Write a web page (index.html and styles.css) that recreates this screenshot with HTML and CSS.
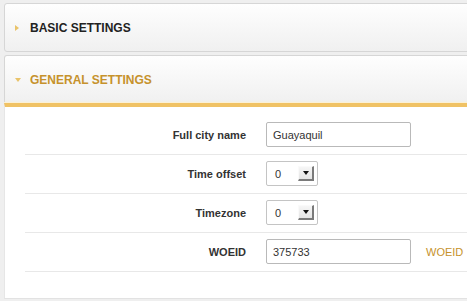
FILE: index.html
```html
<!DOCTYPE html>
<html>
<head>
<meta charset="utf-8">
<link rel="stylesheet" href="styles.css">
</head>
<body>
<div class="viewport">
<div class="page">
  <div class="panel-head">
    <span class="arrow-right"></span>
    <span class="head-title">BASIC SETTINGS</span>
  </div>
  <div class="panel-head open">
    <span class="arrow-down"></span>
    <span class="head-title">GENERAL SETTINGS</span>
  </div>
  <div class="panel-body">
    <div class="row">
      <label class="label">Full city name</label>
      <div class="field"><span class="input wide">Guayaquil</span></div>
    </div>
    <div class="row">
      <label class="label">Time offset</label>
      <div class="field"><span class="select"><span class="sel-val">0</span><span class="sel-btn"><span class="sel-tri"></span></span></span></div>
    </div>
    <div class="row">
      <label class="label">Timezone</label>
      <div class="field"><span class="select"><span class="sel-val">0</span><span class="sel-btn"><span class="sel-tri"></span></span></span></div>
    </div>
    <div class="row">
      <label class="label">WOEID</label>
      <div class="field"><span class="input wide">375733</span><a class="link">WOEID</a></div>
    </div>
  </div>
</div>
</div>
</body>
</html>
```
FILE: styles.css
```css
html, body {
  margin: 0;
  padding: 0;
  overflow: hidden;
}
body {
  background: #efefef;
  font-family: "Liberation Sans", Arial, sans-serif;
  width: 467px;
  height: 301px;
}
.viewport {
  width: 467px;
  height: 301px;
  overflow: hidden;
}
.page {
  padding: 3px 0 0 4px;
  margin-right: -30px;
}
.panel-head {
  height: 47px;
  border: 1px solid #d6d6d6;
  border-radius: 3px;
  background: linear-gradient(#fefefe, #f0f0f0);
  display: flex;
  align-items: center;
  padding-left: 10px;
  margin-bottom: 3px;
}
.panel-head.open {
  margin-bottom: 0;
  border-bottom: none;
  border-radius: 3px 3px 0 0;
  height: 47px;
  box-shadow: inset 0 -2px 2px -1px #f8efd0;
}
.head-title {
  font-weight: bold;
  font-size: 12px;
  color: #222;
}
.open .head-title {
  color: #c6922c;
}
.arrow-right {
  width: 0;
  height: 0;
  border-top: 3px solid transparent;
  border-bottom: 3px solid transparent;
  border-left: 4px solid #e9c36a;
  margin-right: 11px;
}
.arrow-down {
  width: 0;
  height: 0;
  border-left: 3px solid transparent;
  border-right: 3px solid transparent;
  border-top: 4px solid #e9c36a;
  margin-right: 9px;
}
.panel-body {
  border-top: 4px solid #f0c264;
  box-shadow: 0 -1px 0 #fbf1d6;
  background: #fff;
  border-left: 1px solid #e6e6e6;
  border-bottom: 1px solid #e2e2e2;
  padding: 9px 0 26px 20px;
}
.row {
  display: flex;
  align-items: center;
  padding: 6px 0 7px 0;
  border-bottom: 1px solid #e8e8e8;
}
.label {
  width: 221px;
  text-align: right;
  font-weight: bold;
  font-size: 11px;
  color: #333;
  margin-right: 20px;
}
.field {
  display: flex;
  align-items: center;
}
.input {
  box-sizing: border-box;
  height: 25px;
  border: 1px solid #b9b9b9;
  border-radius: 2px;
  display: flex;
  align-items: center;
  padding-left: 6px;
  font-size: 11px;
  color: #333;
  background: #fff;
}
.wide {
  width: 145px;
}
.link {
  margin-left: 15px;
  font-size: 11px;
  color: #c6922c;
}
.select {
  box-sizing: border-box;
  width: 52px;
  height: 25px;
  border: 1px solid #c4c4c4;
  border-radius: 2px;
  display: flex;
  align-items: center;
  justify-content: space-between;
  padding-left: 8px;
  padding-right: 3px;
  font-size: 11px;
  color: #333;
}
.sel-btn {
  box-sizing: border-box;
  width: 16px;
  height: 15px;
  background: linear-gradient(#f6f6f6, #e4e4e4);
  border-top: 1px solid #fafafa;
  border-left: 1px solid #fafafa;
  border-right: 2px solid #7a7a7a;
  border-bottom: 2px solid #7a7a7a;
  display: flex;
  align-items: center;
  justify-content: center;
}
.sel-tri {
  width: 0;
  height: 0;
  border-left: 3px solid transparent;
  border-right: 3px solid transparent;
  border-top: 4px solid #111;
}
```
